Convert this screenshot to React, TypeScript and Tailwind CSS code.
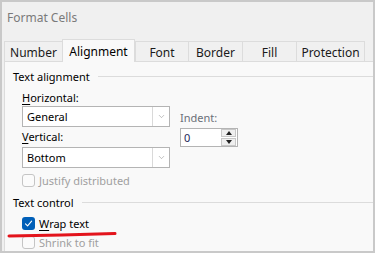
import { ChevronDown } from "lucide-react";

const tabs = ["Number", "Alignment", "Font", "Border", "Fill", "Protection"];
const tabW = [58, 73, 53, 54, 54, 69];

const Check = ({ checked = false, disabled = false }: { checked?: boolean; disabled?: boolean }) =>
  checked ? (
    <span className="w-[13px] h-[13px] rounded-[3px] bg-[#005fb8] flex items-center justify-center">
      <svg width="9" height="9" viewBox="0 0 9 9" fill="none">
        <path d="M1.5 4.8 L3.6 6.8 L7.6 2.2" stroke="white" strokeWidth="1.1" strokeLinecap="round" strokeLinejoin="round" />
      </svg>
    </span>
  ) : (
    <span
      className={`w-[13px] h-[13px] rounded-[3px] border ${
        disabled ? "border-[#c5c5c5] bg-[#fbfbfb]" : "border-[#8a8a8a] bg-white"
      }`}
    />
  );

const Combo = ({ value }: { value: string }) => (
  <div className="h-[21px] w-[148px] border border-[#b4b4b4] bg-white flex items-center">
    <span className="flex-1 pl-[4px] text-black">{value}</span>
    <span className="w-[17px] h-full border-l border-[#d9d9d9] flex items-center justify-center text-[#8a8a8a]">
      <ChevronDown size={9} strokeWidth={1.4} />
    </span>
  </div>
);

const Group = ({ title }: { title: string }) => (
  <div className="h-[15px] flex items-center pl-[8px]">
    <span className="text-black">{title}</span>
    <span className="flex-1 h-px bg-[#dcdcdc] ml-[8px]" />
  </div>
);

export default function App() {
  return (
    <div
      className="w-[375px] h-[253px] border-2 border-[#c9c9c9] bg-[#f0f0f0] flex flex-col text-[11px] leading-[15px] relative overflow-hidden"
      style={{ fontFamily: '"Segoe UI", "Noto Sans", Arial, sans-serif' }}
    >
      <div className="h-[37px] pl-[5px] pt-[8px] text-[12px] text-[#7a7a7a]">Format Cells</div>

      <div className="flex items-end h-[22px] pl-[2px]">
        {tabs.map((t, i) =>
          t === "Alignment" ? (
            <div
              key={t}
              className="h-[23px] -mb-px z-10 bg-[#f9f9f9] border border-b-0 border-[#dcdcdc] flex items-center justify-center text-black text-[12px]"
              style={{ width: tabW[i] }}
            >
              {t}
            </div>
          ) : (
            <div
              key={t}
              className="h-[20px] border border-b-0 border-r-0 last:border-r border-[#dcdcdc] flex items-center justify-center pt-[1px] text-[#1a1a1a] text-[12px]"
              style={{ width: tabW[i] }}
            >
              {t}
            </div>
          )
        )}
      </div>

      <div className="flex-1 ml-[2px] bg-[#f9f9f9] border-t border-l border-[#dcdcdc] pt-[7px]">
        <Group title="Text alignment" />

        <div className="flex pl-[17px] gap-[10px]">
          <div className="flex flex-col">
            <div className="h-[15px] mt-[6px]">
              <span className="underline underline-offset-2">H</span>orizontal:
            </div>
            <div className="mt-[1px]">
              <Combo value="General" />
            </div>
            <div className="h-[15px] mt-[2px]">
              <span className="underline underline-offset-2">V</span>ertical:
            </div>
            <div className="mt-[3px]">
              <Combo value="Bottom" />
            </div>
          </div>

          <div className="flex flex-col">
            <div className="h-[15px] mt-[26px] text-[#6b6f78]">Indent:</div>
            <div className="mt-[3px] h-[19px] w-[58px] border border-[#b4b4b4] bg-white flex items-center">
              <span className="flex-1 pl-[3px] text-[#1e2a5a]">0</span>
              <div className="w-[15px] h-[17px] mr-[1px] flex flex-col gap-px">
                <span className="flex-1 bg-[#efefef] border border-[#c8c8c8] flex items-center justify-center">
                  <svg width="6" height="4" viewBox="0 0 6 4">
                    <path d="M0 4 L3 0 L6 4 Z" fill="#222" />
                  </svg>
                </span>
                <span className="flex-1 bg-[#efefef] border border-[#c8c8c8] flex items-center justify-center">
                  <svg width="6" height="4" viewBox="0 0 6 4">
                    <path d="M0 0 L6 0 L3 4 Z" fill="#222" />
                  </svg>
                </span>
              </div>
            </div>
          </div>
        </div>

        <div className="h-[13px] mt-[6px] pl-[17px] flex items-center gap-[4px] text-[#a0a0a0]">
          <Check disabled />
          <span>Justify distributed</span>
        </div>

        <div className="mt-[8px]">
          <Group title="Text control" />
        </div>

        <div className="h-[13px] mt-[7px] pl-[17px] flex items-center gap-[4px] text-black">
          <Check checked />
          <span>
            <span className="underline underline-offset-2">W</span>rap text
          </span>
        </div>

        <div className="h-[13px] mt-[6px] pl-[17px] flex items-center gap-[4px] text-[#a0a0a0]">
          <Check disabled />
          <span>Shrink to fit</span>
        </div>
      </div>

      <svg className="absolute left-[5px] top-[229px]" width="112" height="8" viewBox="0 0 112 8">
        <path d="M2 5 Q 55 4.2 108 2.5" stroke="#e3141c" strokeWidth="3" fill="none" strokeLinecap="round" />
      </svg>
    </div>
  );
}
